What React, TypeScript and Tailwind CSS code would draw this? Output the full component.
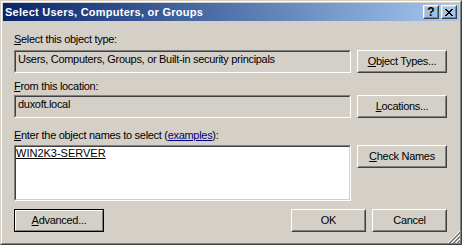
import React from 'react';

function Raised({ children, className = '', isDefault = false }: { children: React.ReactNode; className?: string; isDefault?: boolean }) {
  if (isDefault) {
    return (
      <div className={`border border-black ${className}`}>
        <div className="h-full border border-t-white border-l-white border-r-[#808080] border-b-[#808080] flex items-center justify-center">
          {children}
        </div>
      </div>
    );
  }
  return (
    <div className={`border border-t-white border-l-white border-r-[#404040] border-b-[#404040] ${className}`}>
      <div className="h-full border border-t-[#d4d0c8] border-l-[#d4d0c8] border-r-[#808080] border-b-[#808080] flex items-center justify-center">
        {children}
      </div>
    </div>
  );
}

function Sunken({ children, className = '', white = false }: { children?: React.ReactNode; className?: string; white?: boolean }) {
  return (
    <div className={`border border-t-[#808080] border-l-[#808080] border-r-white border-b-white ${className}`}>
      <div
        className={`h-full border border-t-[#404040] border-l-[#404040] border-r-[#d4d0c8] border-b-[#d4d0c8] ${
          white ? 'bg-white' : 'bg-[#d4d0c8]'
        }`}
      >
        {children}
      </div>
    </div>
  );
}

function CloseGlyph() {
  const rows = ['11000011', '01100110', '00111100', '00011000', '00111100', '01100110', '11000011'];
  return (
    <svg width="8" height="7" viewBox="0 0 8 7" shapeRendering="crispEdges">
      {rows.map((r, y) =>
        r.split('').map((c, x) => (c === '1' ? <rect key={`${x}-${y}`} x={x} y={y} width="1" height="1" fill="#000" /> : null))
      )}
    </svg>
  );
}

function Grip() {
  const stripes = [0, 4, 8];
  return (
    <svg width="12" height="12" viewBox="0 0 12 12" className="absolute right-0 bottom-0" shapeRendering="crispEdges">
      {stripes.map((k) => (
        <g key={k}>
          <line x1={k} y1={12} x2={12} y2={k} stroke="#ffffff" strokeWidth="1" />
          <line x1={k + 1} y1={12} x2={12} y2={k + 1} stroke="#808080" strokeWidth="1" />
          <line x1={k + 2} y1={12} x2={12} y2={k + 2} stroke="#808080" strokeWidth="1" />
        </g>
      ))}
    </svg>
  );
}

export default function App() {
  return (
    <div className="w-[462px] h-[245px] bg-[#d4d0c8] font-['Liberation_Sans',Arial,sans-serif] text-[11px] leading-[13px] text-black tracking-[-0.3px]">
      <div className="h-full border border-t-[#d4d0c8] border-l-[#d4d0c8] border-r-[#404040] border-b-[#404040]">
        <div className="relative h-full border border-t-white border-l-white border-r-[#808080] border-b-[#808080] p-px flex flex-col">
          {/* caption */}
          <div className="h-[18px] bg-linear-to-r from-[#0a246a] to-[#a6caf0] flex items-center pl-[2px] pr-[2px]">
            <span className="flex-1 text-white font-bold tracking-[0.25px]">Select Users, Computers, or Groups</span>
            <Raised className="w-[16px] h-[14px]">
              <span className="font-bold text-[12px] leading-none tracking-normal">?</span>
            </Raised>
            <Raised className="w-[16px] h-[14px] ml-[2px]">
              <CloseGlyph />
            </Raised>
          </div>

          <div className="flex flex-col pl-[11px] pr-[12px]">
            <div className="mt-[12px]">
              <span className="underline">S</span>elect this object type:
            </div>
            <div className="mt-[4px] flex gap-[6px] h-[23px]">
              <Sunken className="flex-1">
                <div className="pl-[2px] pt-[1px] whitespace-nowrap">Users, Computers, Groups, or Built-in security principals</div>
              </Sunken>
              <Raised className="w-[90px]">
                <span>
                  <span className="underline">O</span>bject Types...
                </span>
              </Raised>
            </div>

            <div className="mt-[7px]">
              <span className="underline">F</span>rom this location:
            </div>
            <div className="mt-[2px] flex gap-[6px] h-[23px]">
              <Sunken className="flex-1">
                <div className="pl-[2px] pt-[1px]">duxoft.local</div>
              </Sunken>
              <Raised className="w-[90px]">
                <span>
                  <span className="underline">L</span>ocations...
                </span>
              </Raised>
            </div>

            <div className="mt-[11px]">
              <span className="underline">E</span>nter the object names to select (
              <span className="underline text-[#000080]">examples</span>):
            </div>
            <div className="mt-[3px] flex gap-[6px] items-start">
              <Sunken className="flex-1 h-[56px]" white>
                <div className="underline tracking-normal">WIN2K3-SERVER</div>
              </Sunken>
              <Raised className="w-[90px] h-[23px]">
                <span>
                  <span className="underline">C</span>heck Names
                </span>
              </Raised>
            </div>

            <div className="mt-[8px] flex h-[23px]">
              <Raised className="w-[90px]" isDefault>
                <span>
                  <span className="underline">A</span>dvanced...
                </span>
              </Raised>
              <div className="flex-1" />
              <Raised className="w-[75px]">
                <span>OK</span>
              </Raised>
              <Raised className="w-[75px] ml-[6px]">
                <span>Cancel</span>
              </Raised>
            </div>
          </div>

          <Grip />
        </div>
      </div>
    </div>
  );
}
